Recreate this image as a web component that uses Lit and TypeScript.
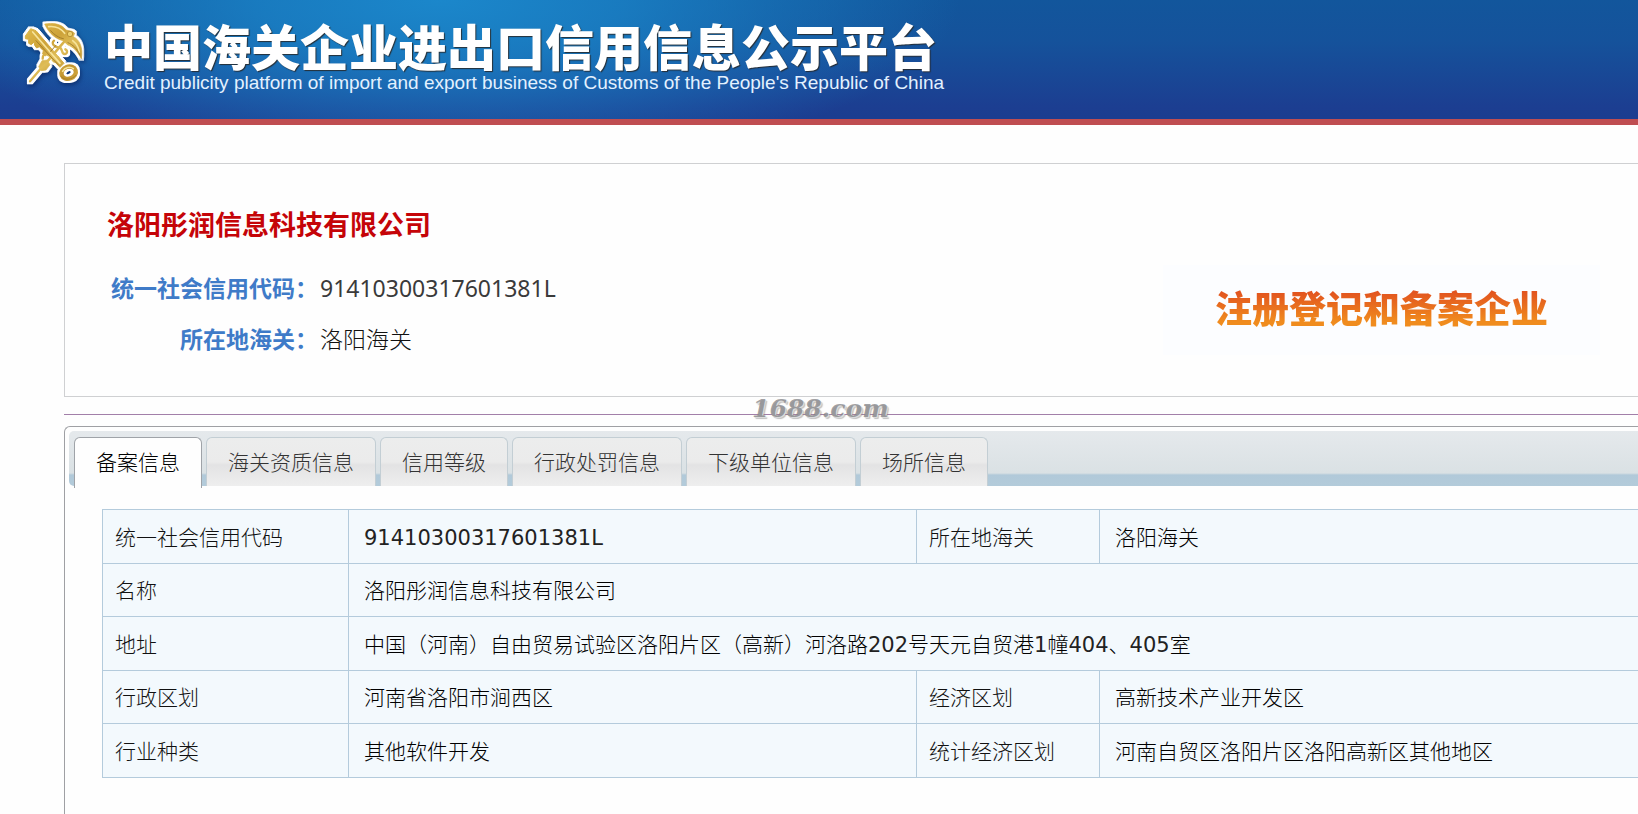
import { LitElement, html, css, svg } from "lit";
import { customElement, state } from "lit/decorators.js";
import { classMap } from "lit/directives/class-map.js";

interface Field {
  label: string;
  value: string;
}

const TABS = ["备案信息", "海关资质信息", "信用等级", "行政处罚信息", "下级单位信息", "场所信息"];

const ROWS: Field[][] = [
  [
    { label: "统一社会信用代码", value: "91410300317601381L" },
    { label: "所在地海关", value: "洛阳海关" },
  ],
  [{ label: "名称", value: "洛阳彤润信息科技有限公司" }],
  [{ label: "地址", value: "中国（河南）自由贸易试验区洛阳片区（高新）河洛路202号天元自贸港1幢404、405室" }],
  [
    { label: "行政区划", value: "河南省洛阳市涧西区" },
    { label: "经济区划", value: "高新技术产业开发区" },
  ],
  [
    { label: "行业种类", value: "其他软件开发" },
    { label: "统计经济区划", value: "河南自贸区洛阳片区洛阳高新区其他地区" },
  ],
];

// Latin runs take a heavier weight than the light CJK strokes around them.
const withLatin = (text: string) =>
  text
    .split(/([0-9A-Za-z]+)/)
    .filter((part) => part)
    .map((part) => (/^[0-9A-Za-z]/.test(part) ? html`<span class="latin">${part}</span>` : part));

// Customs emblem: a golden key crossed with the winged staff of Mercury.
const emblemShapes = svg`
  <path d="M60 214 L92 176" stroke-width="7" fill="none" stroke-linecap="round"/>
  <path d="M86 170 L96 152 L112 150 L120 164 L108 180 L94 182 Z" stroke-width="2" stroke-linejoin="round"/>
  <path d="M104 164 L172 84" stroke-width="8" fill="none" stroke-linecap="round"/>
  <path d="M132 92 C122 100 134 112 146 112 C160 112 152 132 164 132 C172 132 174 122 166 118" stroke-width="7" fill="none" stroke-linecap="round"/>
  <path d="M98 146 C98 130 110 130 116 136 M128 150 C136 160 150 154 144 142" stroke-width="7" fill="none" stroke-linecap="round"/>
  <path d="M104 42 C128 38 154 40 168 60 L186 64 L194 70 L190 80 C208 88 220 112 214 146 C204 126 192 112 172 104 L160 92 C138 88 116 70 104 42 Z" stroke-width="2" stroke-linejoin="round"/>
  <path d="M62 56 L78 62 L162 160 L150 172 L112 132 L106 138 L98 132 L100 122 L88 110 L80 114 L74 106 L72 96 L64 104 L56 100 L56 88 L46 86 L46 78 Z" stroke-width="3" stroke-linejoin="round"/>
  <ellipse cx="176" cy="188" rx="22" ry="18" stroke-width="13" fill="none" transform="rotate(-20 176 188)"/>
`;

@customElement("customs-emblem")
export class CustomsEmblem extends LitElement {
  static styles = css`
    :host {
      display: block;
      width: 90px;
      height: 90px;
    }
    .emblem {
      display: block;
      width: 100%;
      height: 100%;
      filter: drop-shadow(1px 2px 2px rgba(5, 25, 80, 0.6));
    }
    .outline {
      stroke: #fff;
      fill: #fff;
    }
  `;

  render() {
    return html`
      <svg class="emblem" viewBox="0 0 270 270" role="img" aria-label="海关关徽">
        <defs>
          <linearGradient id="gold" gradientUnits="userSpaceOnUse" x1="60" y1="40" x2="200" y2="220">
            <stop offset="0" stop-color="#e0bb4c" />
            <stop offset="0.35" stop-color="#cda238" />
            <stop offset="0.55" stop-color="#dfbd58" />
            <stop offset="0.8" stop-color="#c0922c" />
            <stop offset="1" stop-color="#d6ac42" />
          </linearGradient>
          <filter id="halo" x="-10%" y="-10%" width="120%" height="120%">
            <feMorphology operator="dilate" radius="6" />
          </filter>
        </defs>
        <g class="outline" filter="url(#halo)">${emblemShapes}</g>
        <g stroke="url(#gold)" fill="url(#gold)">${emblemShapes}</g>
        <g fill="none" stroke="#f7e49a" stroke-width="5" stroke-linecap="round">
          <path d="M68 66 L150 160" />
          <path d="M116 50 C134 48 152 54 164 70" />
          <path d="M188 92 C198 100 206 112 208 126" />
          <path d="M158 184 C164 172 180 168 190 176" />
        </g>
        <g fill="none" stroke="#a47e2a" stroke-width="3" stroke-linecap="round">
          <path d="M122 62 C134 76 148 84 160 86" />
          <path d="M78 92 L146 166" />
          <path d="M174 98 C188 104 202 116 209 134" />
          <path d="M122 124 L138 106" />
          <path d="M154 200 C162 212 186 210 198 196" />
        </g>
        <circle cx="180" cy="72" r="8" fill="#ecd06c" stroke="#a47a22" stroke-width="2" />
      </svg>
    `;
  }
}

@customElement("app-root")
export class AppRoot extends LitElement {
  static styles = css`
    :host {
      display: flex;
      flex-direction: column;
      min-height: 100vh;
      box-sizing: border-box;
      overflow-x: hidden;
      background: #fefefe;
      color: #000;
      font-family: "DejaVu Sans", "Noto Sans CJK SC", sans-serif;
      font-size: 21px;
      line-height: 30px;
    }
    * {
      box-sizing: border-box;
    }
    .latin {
      font-weight: 400;
      color: #222;
    }
    .banner {
      display: flex;
      align-items: flex-start;
      gap: 4px;
      padding: 10px 10px 19px;
      border-bottom: 6px solid #bf4d51;
      background:
        radial-gradient(ellipse 520px 170px at 440px 0, #1b87cb 0%, rgba(27, 135, 203, 0.75) 35%, rgba(27, 135, 203, 0) 100%),
        linear-gradient(#12569c 0%, #15529b 35%, #1c3e91 90%, #1c3d90 100%);
    }
    .brand {
      display: flex;
      flex-direction: column;
      gap: 2px;
      padding-top: 10px;
      white-space: nowrap;
      color: #fff;
    }
    .platform {
      margin: 0;
      font: 900 49px/50px "Noto Sans CJK SC", sans-serif;
      text-shadow: 1px 1px 1px rgba(40, 40, 40, 0.9);
    }
    .platform-en {
      margin: 0;
      font: 400 19px/22px "Liberation Sans", Arial, sans-serif;
      color: #e3f1ff;
    }
    .page {
      display: flex;
      flex: 1;
      flex-direction: column;
      padding: 38px 0 0 64px;
    }
    .summary {
      display: flex;
      align-items: center;
      justify-content: space-between;
      padding: 40px 38px 31px 42px;
      border: 1px solid #cfd0d2;
      border-right: 0;
    }
    .company {
      margin: 0 0 19px;
      font: 700 27px/40px "Noto Sans CJK SC", sans-serif;
      color: #c50408;
    }
    .facts {
      display: grid;
      grid-template-columns: auto 1fr;
      column-gap: 2px;
      margin: 0;
      padding-left: 4px;
      font: 400 23px/51px "Noto Sans", "Noto Sans CJK SC", sans-serif;
    }
    .facts dt {
      font-weight: 700;
      text-align: right;
      color: #3f7bc8;
    }
    .facts dd {
      margin: 0;
      font-weight: 300;
      color: #111;
    }
    .facts .latin {
      color: #3a3a3a;
    }
    .status {
      align-self: flex-end;
      margin-bottom: 10px;
      padding: 17px 52px 23px;
      background: #fcfdff;
    }
    .status-text {
      display: block;
      font: 900 37px/50px "Noto Sans CJK SC", sans-serif;
      white-space: nowrap;
      color: transparent;
      background: linear-gradient(#e2541f 20%, #f08c1e 80%);
      background-clip: text;
      -webkit-background-clip: text;
    }
    .divider {
      position: relative;
      height: 29px;
      flex: none;
      padding-top: 17px;
    }
    .rule {
      margin: 0;
      border: 0;
      border-top: 1px solid #a27fa9;
    }
    .watermark {
      position: absolute;
      left: 688px;
      top: -3px;
      font: italic 700 25px/30px "DejaVu Serif", serif;
      color: rgba(130, 130, 134, 0.75);
      text-shadow: 1px 1px 0 #dcdcdc, 2px 2px 1px rgba(130, 130, 130, 0.5);
      pointer-events: none;
    }
    .panel {
      flex: 1;
      padding: 4px 0 0 4px;
      border: 1px solid #9fa0a4;
      border-width: 1px 0 0 1px;
      border-top-left-radius: 6px;
    }
    .tabs {
      display: flex;
      gap: 4px;
      height: 55px;
      padding: 6px 0 0 5px;
      border-radius: 5px 0 0 5px;
      background: linear-gradient(#e5e9ec 0, #dae1e4 42px, #b1c9d9 44px, #b3cbda 100%);
    }
    .tab {
      flex: none;
      height: 49px;
      margin: 0;
      padding: 0 21px 2px;
      border: 1px solid #c3ced4;
      border-bottom: 0;
      border-radius: 6px 6px 0 0;
      background: linear-gradient(#eceded 0, #ebebeb 50%, #e3e3e4 56%, #eeeeee 100%);
      font: 300 21px/30px "Noto Sans CJK SC", sans-serif;
      color: #333;
      cursor: pointer;
    }
    .tab.active {
      height: 51px;
      padding-bottom: 4px;
      border-color: #9fa3a8;
      background: #fefefe;
      color: #000;
    }
    .records {
      padding: 23px 0 0 33px;
    }
    .grid {
      width: 100%;
      table-layout: fixed;
      border-collapse: collapse;
      background: #f3f9fd;
      font-weight: 300;
    }
    .grid tr {
      height: 54px;
    }
    .grid tr:nth-child(even) {
      height: 53px;
    }
    .grid th,
    .grid td {
      padding: 2px 0 0 15px;
      border: 1px solid #b4cbdc;
      border-right: 0;
      text-align: left;
      font-weight: inherit;
      white-space: nowrap;
    }
    .grid th {
      padding-left: 12px;
      color: #111;
    }
    .col-label {
      width: 246px;
    }
    .col-value {
      width: 568px;
    }
    .col-label-2 {
      width: 183px;
    }
  `;

  @state() private active = 0;

  private renderRow(row: Field[]) {
    const span = row.length === 1 ? 3 : 1;
    return html`<tr>
      ${row.map(
        (f) => html`<th scope="row">${f.label}</th>
          <td colspan=${span}>${withLatin(f.value)}</td>`
      )}
    </tr>`;
  }

  render() {
    return html`
      <header class="banner">
        <customs-emblem></customs-emblem>
        <div class="brand">
          <h1 class="platform">中国海关企业进出口信用信息公示平台</h1>
          <p class="platform-en">Credit publicity platform of import and export business of Customs of the People's Republic of China</p>
        </div>
      </header>
      <main class="page">
        <section class="summary">
          <div>
            <h2 class="company">洛阳彤润信息科技有限公司</h2>
            <dl class="facts">
              <dt>统一社会信用代码：</dt>
              <dd>${withLatin("91410300317601381L")}</dd>
              <dt>所在地海关：</dt>
              <dd>洛阳海关</dd>
            </dl>
          </div>
          <div class="status"><strong class="status-text">注册登记和备案企业</strong></div>
        </section>
        <div class="divider">
          <hr class="rule" />
          <span class="watermark">1688.com</span>
        </div>
        <section class="panel">
          <div class="tabs" role="tablist">
            ${TABS.map(
              (name, i) => html`<button
                type="button"
                role="tab"
                class=${classMap({ tab: true, active: i === this.active })}
                aria-selected=${i === this.active ? "true" : "false"}
                @click=${() => (this.active = i)}
              >${name}</button>`
            )}
          </div>
          <div class="records" role="tabpanel">
            <table class="grid">
              <colgroup>
                <col class="col-label" />
                <col class="col-value" />
                <col class="col-label-2" />
                <col />
              </colgroup>
              <tbody>
                ${ROWS.map((r) => this.renderRow(r))}
              </tbody>
            </table>
          </div>
        </section>
      </main>
    `;
  }
}
